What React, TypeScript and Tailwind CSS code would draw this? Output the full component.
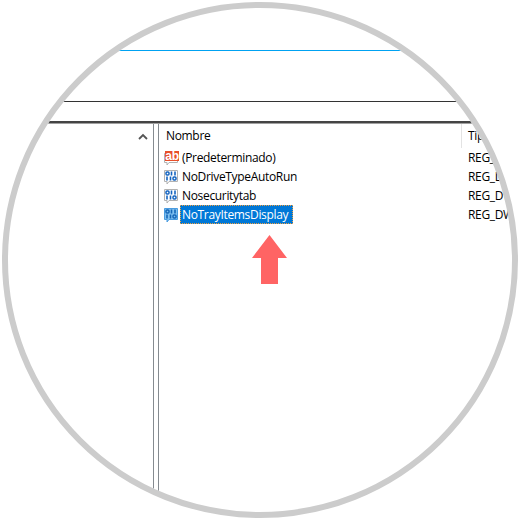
const font = { fontFamily: '"Open Sans", "Noto Sans", sans-serif' };

function BinIcon({ selected }: { selected?: boolean }) {
  const ink = selected ? "#1466b8" : "#1464c0";
  return (
    <svg width="16" height="16" viewBox="0 0 16 16" className="shrink-0">
      <path d="M1.5 1.5H14.5V12.5H6L4 15V12.5H1.5Z" fill={selected ? "#7fc0f0" : "#ffffff"} stroke={selected ? "#4a9ce0" : "#b2b2b2"} />
      <rect x="3" y="3" width="3" height="3" rx="1" fill="none" stroke={ink} strokeWidth="1.5" />
      <path d="M8.5 2.5V6.5M12 2.5V6.5" stroke={ink} strokeWidth="1.6" />
      <path d="M4 7.5V11.5M7.5 7.5V11.5" stroke={ink} strokeWidth="1.6" />
      <rect x="10" y="8" width="3" height="3" rx="1" fill="none" stroke={ink} strokeWidth="1.5" />
    </svg>
  );
}

function AbIcon() {
  return (
    <svg width="16" height="16" viewBox="0 0 16 16" className="shrink-0">
      <path d="M1.5 3.5H14.5V12.5H6L4 15V12.5H1.5Z" fill="#ffffff" stroke="#b2b2b2" />
      <rect x="2" y="1" width="14" height="10" fill="#e8502a" />
      <text x="9" y="9.7" textAnchor="middle" fontSize="12" fontWeight="700" fill="#ffffff" letterSpacing="-0.3" fontFamily="Liberation Sans, sans-serif">ab</text>
    </svg>
  );
}

function Row({ icon, name, type, selected }: { icon: React.ReactNode; name: string; type: string; selected?: boolean }) {
  return (
    <div className="flex h-[19px] items-center">
      <div className="flex w-[302px] shrink-0 items-center pl-[4px]">
        {icon}
        {selected ? (
          <span className="ml-px flex h-[19px] w-[113px] items-center border border-dotted border-[#f0a040] bg-[#0078d7] pl-px text-white">{name}</span>
        ) : (
          <span className="ml-[3px] text-black">{name}</span>
        )}
      </div>
      <span className="ml-[7px] whitespace-nowrap text-black">{type}</span>
    </div>
  );
}

export default function App() {
  return (
    <div className="h-[520px] w-[520px] bg-white p-[2px]">
      <div className="relative h-[516px] w-[516px] overflow-hidden rounded-full border-[6px] border-[#cccccc] bg-white text-[12px] leading-none tracking-[-0.33px]" style={font}>
        <div className="mt-[42px] h-px bg-[#00a2f2]" />
        <div className="mt-[50px] h-px bg-[#333333]" />
        <div className="mt-[19px] h-[2px] bg-[#444444]" />
        <div className="flex h-[400px] border-t border-[#a0a0a0]">
          <div className="flex w-[146px] shrink-0 justify-end border-r border-[#858b90] pr-[4px] pt-[8px]">
            <svg width="10" height="7" viewBox="0 0 10 7" className="mr-[1px] mt-px">
              <path d="M1 6L5 2L9 6" fill="none" stroke="#555555" strokeWidth="1.8" />
            </svg>
          </div>
          <div className="ml-[4px] min-w-0 flex-1 border-l border-[#858b90]">
            <div className="flex h-[24px] items-center">
              <span className="ml-[7px] w-[295px] shrink-0 text-black">Nombre</span>
              <span className="h-[24px] w-px shrink-0 bg-[#e3e3e3]" />
              <span className="ml-[6px] text-black">Tipo</span>
            </div>
            <Row icon={<AbIcon />} name="(Predeterminado)" type="REG_SZ" />
            <Row icon={<BinIcon />} name="NoDriveTypeAutoRun" type="REG_DWORD" />
            <Row icon={<BinIcon />} name="Nosecuritytab" type="REG_DWORD" />
            <Row icon={<BinIcon selected />} name="NoTrayItemsDisplay" type="REG_DWORD" selected />
          </div>
        </div>
        <svg width="35" height="49" viewBox="0 0 35 49" className="absolute left-[244px] top-[227px]">
          <path d="M17.5 0L35 23H26V49H9V23H0Z" fill="#ff6464" />
        </svg>
      </div>
    </div>
  );
}
